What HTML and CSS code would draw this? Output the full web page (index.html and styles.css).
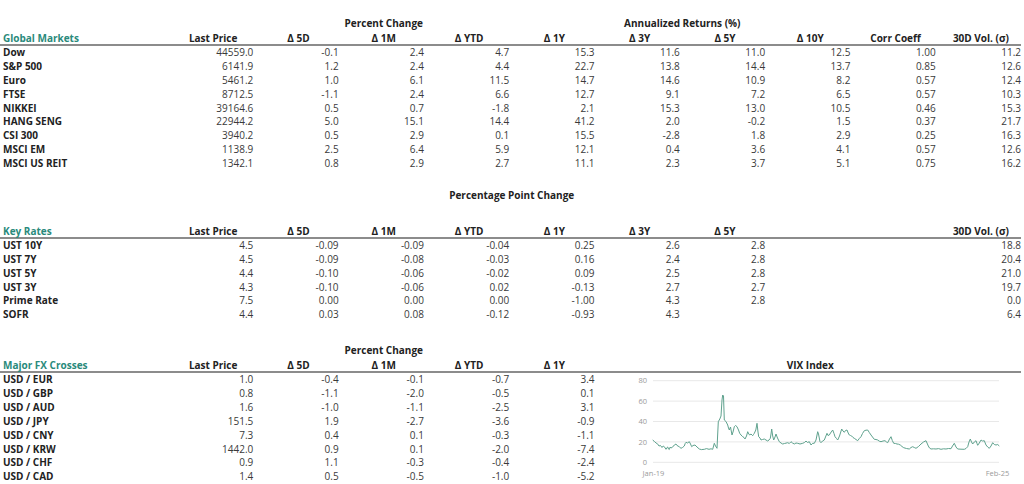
FILE: index.html
```html
<!DOCTYPE html>
<html lang="en">
<head>
<meta charset="utf-8">
<title>Markets Dashboard</title>
<link rel="stylesheet" href="styles.css">
</head>
<body>
<main class="page">
  <table class="mkt t1">
    <colgroup><col class="c-label"><col span="10" class="c-num"></colgroup>
    <thead>
      <tr class="group">
        <th></th><th></th>
        <th colspan="3">Percent Change</th>
        <th colspan="4">Annualized Returns (%)</th>
        <th></th><th></th>
      </tr>
      <tr class="head">
        <th class="title">Global Markets</th>
        <th>Last Price</th><th>Δ 5D</th><th>Δ 1M</th><th>Δ YTD</th><th>Δ 1Y</th><th>Δ 3Y</th><th>Δ 5Y</th><th>Δ 10Y</th><th>Corr Coeff</th><th>30D Vol. (σ)</th>
      </tr>
    </thead>
    <tbody>
      <tr><th>Dow</th><td>44559.0</td><td>-0.1</td><td>2.4</td><td>4.7</td><td>15.3</td><td>11.6</td><td>11.0</td><td>12.5</td><td>1.00</td><td>11.2</td></tr>
      <tr><th>S&amp;P 500</th><td>6141.9</td><td>1.2</td><td>2.4</td><td>4.4</td><td>22.7</td><td>13.8</td><td>14.4</td><td>13.7</td><td>0.85</td><td>12.6</td></tr>
      <tr><th>Euro</th><td>5461.2</td><td>1.0</td><td>6.1</td><td>11.5</td><td>14.7</td><td>14.6</td><td>10.9</td><td>8.2</td><td>0.57</td><td>12.4</td></tr>
      <tr><th>FTSE</th><td>8712.5</td><td>-1.1</td><td>2.4</td><td>6.6</td><td>12.7</td><td>9.1</td><td>7.2</td><td>6.5</td><td>0.57</td><td>10.3</td></tr>
      <tr><th>NIKKEI</th><td>39164.6</td><td>0.5</td><td>0.7</td><td>-1.8</td><td>2.1</td><td>15.3</td><td>13.0</td><td>10.5</td><td>0.46</td><td>15.3</td></tr>
      <tr><th>HANG SENG</th><td>22944.2</td><td>5.0</td><td>15.1</td><td>14.4</td><td>41.2</td><td>2.0</td><td>-0.2</td><td>1.5</td><td>0.37</td><td>21.7</td></tr>
      <tr><th>CSI 300</th><td>3940.2</td><td>0.5</td><td>2.9</td><td>0.1</td><td>15.5</td><td>-2.8</td><td>1.8</td><td>2.9</td><td>0.25</td><td>16.3</td></tr>
      <tr><th>MSCI EM</th><td>1138.9</td><td>2.5</td><td>6.4</td><td>5.9</td><td>12.1</td><td>0.4</td><td>3.6</td><td>4.1</td><td>0.57</td><td>12.6</td></tr>
      <tr><th>MSCI US REIT</th><td>1342.1</td><td>0.8</td><td>2.9</td><td>2.7</td><td>11.1</td><td>2.3</td><td>3.7</td><td>5.1</td><td>0.75</td><td>16.2</td></tr>
    </tbody>
  </table>

  <table class="mkt t2">
    <colgroup><col class="c-label"><col span="10" class="c-num"></colgroup>
    <thead>
      <tr class="group">
        <th></th><th></th>
        <th colspan="6">Percentage Point Change</th>
        <th></th><th></th><th></th>
      </tr>
      <tr class="spacer"><th colspan="11"></th></tr>
      <tr class="head">
        <th class="title">Key Rates</th>
        <th>Last Price</th><th>Δ 5D</th><th>Δ 1M</th><th>Δ YTD</th><th>Δ 1Y</th><th>Δ 3Y</th><th>Δ 5Y</th><th></th><th></th><th>30D Vol. (σ)</th>
      </tr>
    </thead>
    <tbody>
      <tr><th>UST 10Y</th><td>4.5</td><td>-0.09</td><td>-0.09</td><td>-0.04</td><td>0.25</td><td>2.6</td><td>2.8</td><td></td><td></td><td>18.8</td></tr>
      <tr><th>UST 7Y</th><td>4.5</td><td>-0.09</td><td>-0.08</td><td>-0.03</td><td>0.16</td><td>2.4</td><td>2.8</td><td></td><td></td><td>20.4</td></tr>
      <tr><th>UST 5Y</th><td>4.4</td><td>-0.10</td><td>-0.06</td><td>-0.02</td><td>0.09</td><td>2.5</td><td>2.8</td><td></td><td></td><td>21.0</td></tr>
      <tr><th>UST 3Y</th><td>4.3</td><td>-0.10</td><td>-0.06</td><td>0.02</td><td>-0.13</td><td>2.7</td><td>2.7</td><td></td><td></td><td>19.7</td></tr>
      <tr><th>Prime Rate</th><td>7.5</td><td>0.00</td><td>0.00</td><td>0.00</td><td>-1.00</td><td>4.3</td><td>2.8</td><td></td><td></td><td>0.0</td></tr>
      <tr><th>SOFR</th><td>4.4</td><td>0.03</td><td>0.08</td><td>-0.12</td><td>-0.93</td><td>4.3</td><td></td><td></td><td></td><td>6.4</td></tr>
    </tbody>
  </table>

  <table class="mkt t3">
    <colgroup><col class="c-label"><col span="10" class="c-num"></colgroup>
    <thead>
      <tr class="group">
        <th></th><th></th>
        <th colspan="3">Percent Change</th>
        <th></th>
        <th colspan="5"></th>
      </tr>
      <tr class="head">
        <th class="title">Major FX Crosses</th>
        <th>Last Price</th><th>Δ 5D</th><th>Δ 1M</th><th>Δ YTD</th><th>Δ 1Y</th><th colspan="5">VIX Index</th>
      </tr>
    </thead>
    <tbody>
      <tr><th>USD / EUR</th><td>1.0</td><td>-0.4</td><td>-0.1</td><td>-0.7</td><td>3.4</td>
        <td class="chart" colspan="5" rowspan="8">
          <svg class="vix" viewBox="594 373 427 110" width="427" height="110" aria-label="VIX Index chart">
            <g class="grid">
              <line x1="652" y1="380.7" x2="998" y2="380.7"/>
              <line x1="652" y1="401.1" x2="998" y2="401.1"/>
              <line x1="652" y1="421.5" x2="998" y2="421.5"/>
              <line x1="652" y1="441.9" x2="998" y2="441.9"/>
              <line x1="652" y1="462.3" x2="998" y2="462.3"/>
            </g>
            <g class="ylab">
              <text x="646" y="383.3">80</text>
              <text x="646" y="403.7">60</text>
              <text x="646" y="424.1">40</text>
              <text x="646" y="444.5">20</text>
              <text x="646" y="464.9">0</text>
            </g>
            <g class="xlab">
              <text x="652.5" y="475.5">Jan-19</text>
              <text x="996.5" y="475.5">Feb-25</text>
            </g>
            <polyline class="series" points="651.7,440 653.5,441.5 655,443 656.5,443.8 658,446 659.5,445.5 661,447.5 662.2,446 663.3,446.7 665,449.3 666,447.5 666.7,447 667.5,449 668.3,449.5 669.2,447 670,448 671.5,447.2 673.3,445 675,444 676,445.5 677,446 678.5,447 680,448.3 681.5,447.5 683.3,446 684.2,443.5 685,442.3 686.5,443 688.3,441.7 689.5,444 690.7,446.7 692,445.5 694,445 696,447 698.3,449 700.5,449.6 703.3,449.3 705.5,448.6 708,449.3 710,448.8 711.7,449.3 713.3,443.3 714.5,446 716,448.3 717.3,421.7 718.8,419 720,416 721,400 721.7,395 722.5,396 723.3,420 725,421.5 726.7,425 727.5,428 728.3,430 729.5,427 731,435 732,432 733.3,426.7 734.5,425.5 736,426.7 737.5,430 738.7,433.3 740,435 741.7,436.7 743,437.5 744,439 745.5,436 746.7,431.7 747.8,434 748.7,435 750,434 751.7,435.7 752.5,434.5 753.3,433.3 754.8,430 756,423.3 757,432 757.7,436.7 759,438 760,440 761.5,439.5 763.3,439 765,440 766.7,441 768,440 769.3,438.3 770,434 770.7,429 771.7,436 772.7,440 774,437 775,434 776.5,438 778.3,441.7 780,443 781.7,444 783.5,443.5 786.7,442.7 788.3,443.5 790,441.7 791.5,443 793.3,444 795,443 796.7,443.3 799,444 801.7,443.3 803.5,442.5 805,441 806.5,442.5 808.3,441.7 810,445 811.7,443.3 813.3,443.3 815,440 816.7,431.7 817.5,434 819,441.7 820,442.7 821.5,441 823.3,440 824.5,437 826,433.3 827,435.5 828.3,435 829.5,433 831.7,430 833,433.5 834,436.7 835.5,438.5 836.7,440 838.5,436 840.7,429 842,431 843.3,432.3 844.5,430.5 846,430 847.2,433 848.3,435 849.5,435.5 850.7,436 852,437.5 853.3,438.3 855,439.5 856.7,440.7 858.3,438.5 860,436.7 861.5,433.5 863.3,430.7 865,430.2 866.7,430 868.3,432.5 870,435 871.5,437 873.3,439.3 875,439.5 876.7,440 878.3,441.2 880,441.7 882,441 884,440.7 885.5,442 886.7,442.7 888.5,439 890,436.7 891.3,440.5 892.7,443.3 894.5,443.5 896,444 897.5,444.2 899.3,445 901,446.5 902.7,447.7 905.5,448.5 908.3,449 910,447.5 911.7,446.7 913.3,447.5 915,448.3 917.5,446.5 920,444 922.5,442 925,440.7 926,443 927.3,446 928.5,448 930,449 932.5,448.8 935,449 937.5,448.6 940,449.3 942.5,448.8 945,449 947.5,448.5 950,448.7 951.5,446 953.3,443.3 955,447 956.7,449 960,449.2 963.3,449.3 965,448.5 966.7,446.7 968,442 969.3,439 970.5,442 971.7,444 973.3,442 975,440.7 976,443.5 976.7,445.3 978.3,443 980,440 981.5,441 983.3,440.7 984.2,443 985,445 986.7,447 988.3,448.3 990,446 991.7,442.7 993.3,444.5 995,445 996.7,444.5 998.3,446"/>
          </svg>
        </td>
      </tr>
      <tr><th>USD / GBP</th><td>0.8</td><td>-1.1</td><td>-2.0</td><td>-0.5</td><td>0.1</td></tr>
      <tr><th>USD / AUD</th><td>1.6</td><td>-1.0</td><td>-1.1</td><td>-2.5</td><td>3.1</td></tr>
      <tr><th>USD / JPY</th><td>151.5</td><td>1.9</td><td>-2.7</td><td>-3.6</td><td>-0.9</td></tr>
      <tr><th>USD / CNY</th><td>7.3</td><td>0.4</td><td>0.1</td><td>-0.3</td><td>-1.1</td></tr>
      <tr><th>USD / KRW</th><td>1442.0</td><td>0.9</td><td>0.1</td><td>-2.0</td><td>-7.4</td></tr>
      <tr><th>USD / CHF</th><td>0.9</td><td>1.1</td><td>-0.3</td><td>-0.4</td><td>-2.4</td></tr>
      <tr><th>USD / CAD</th><td>1.4</td><td>0.5</td><td>-0.5</td><td>-1.0</td><td>-5.2</td></tr>
    </tbody>
  </table>
</main>
</body>
</html>
```

FILE: styles.css
```css
html, body {
  margin: 0;
  padding: 0;
  background: #ffffff;
}

body {
  font-family: "Open Sans", "Liberation Sans", sans-serif;
  font-size: 10px;
  color: #333333;
  overflow: hidden;
}

.page {
  width: 1024px;
  height: 484px;
  overflow: hidden;
}

.mkt {
  table-layout: fixed;
  width: 1021px;
  border-collapse: separate;
  border-spacing: 0;
}

.c-label { width: 168px; }
.c-num { width: 85.3px; }

.t1 { margin-top: 15px; }
.t2 { margin-top: 16px; }
.t3 { margin-top: 20px; }

.mkt th,
.mkt td {
  padding: 0 0 0 5px;
  white-space: nowrap;
  overflow: visible;
}

.mkt thead th {
  font-weight: 700;
  color: #222222;
  text-align: center;
}

.group th {
  line-height: 17px;
  height: 17px;
}

.spacer th {
  height: 21px;
  line-height: 21px;
}

.head th {
  line-height: 12px;
  height: 12px;
  border-bottom: 2px solid #8c8c8c;
}

.mkt thead th.title {
  text-align: left;
  padding-left: 3px;
  color: #2a8a7b;
}

.mkt tbody th {
  text-align: left;
  padding-left: 3px;
  font-weight: 700;
  color: #222222;
}

.mkt tbody th,
.mkt tbody td {
  line-height: 13.875px;
  height: 13.875px;
}

.mkt tbody td {
  text-align: right;
  color: #3a3a3a;
}

.mkt tbody td.chart {
  padding: 0;
  vertical-align: top;
  line-height: 0;
}

.vix {
  display: block;
  width: 427px;
  height: 110px;
  font-family: "Open Sans", "Liberation Sans", sans-serif;
}

.vix .grid line {
  stroke: #e8e8e8;
  stroke-width: 1;
}

.vix .ylab text {
  font-size: 7.5px;
  fill: #9a9a9a;
  text-anchor: end;
}

.vix .xlab text {
  font-size: 7.5px;
  fill: #9a9a9a;
  text-anchor: middle;
}

.vix .series {
  fill: none;
  stroke: #5fa28e;
  stroke-width: 1;
  stroke-linejoin: round;
}
```
